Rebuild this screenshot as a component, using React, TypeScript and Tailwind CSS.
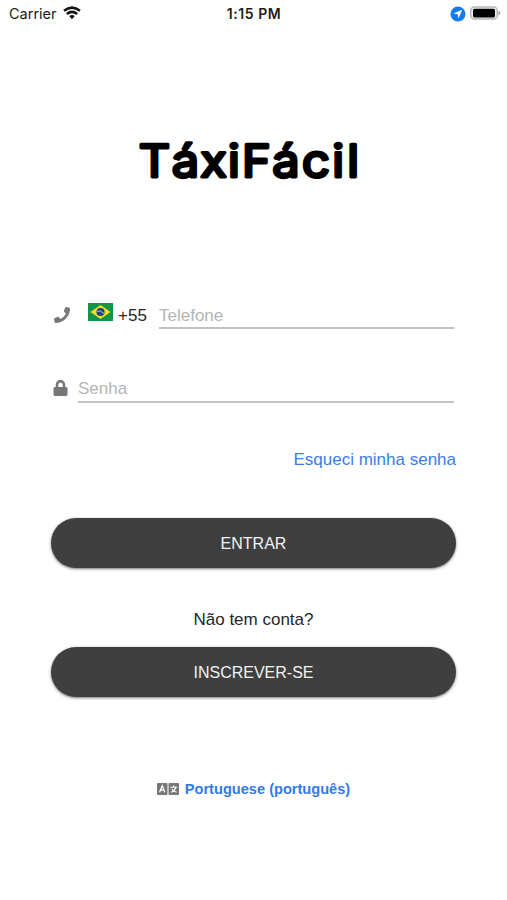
import React from "react";
import { FaLock, FaPhone } from "react-icons/fa";

function StatusBar() {
  return (
    <header className="grid h-7 grid-cols-3 items-center pl-[9px] pr-[6px] font-['Inter',sans-serif] text-[#1c1c1c]">
      <div className="flex items-center gap-[6px]">
        <span className="text-[14.5px] leading-5">Carrier</span>
        <svg viewBox="0 0 18 14" className="-mt-[2px] h-[14px] w-[18px]" fill="none" stroke="#111" strokeWidth="2.5">
          <path d="M1 4.8 Q9 -1.6 17 4.8" />
          <path d="M3.8 8 Q9 3.7 14.2 8" />
          <path d="M6.2 10 Q9 7.8 11.8 10 L9 13.2Z" fill="#111" stroke="none" />
        </svg>
      </div>
      <span className="-ml-[2px] whitespace-nowrap text-center text-[14px] font-semibold leading-5 tracking-[0.55px]">1:15 PM</span>
      <div className="flex items-center justify-end gap-[4px]">
        <svg viewBox="0 0 16 16" className="h-4 w-4">
          <circle cx="8" cy="8" r="7.5" fill="#147bf6" />
          <path d="M12.3 3.7 3.5 7.6 7.7 8.3 8.5 12.4Z" fill="white" />
        </svg>
        <svg viewBox="0 0 31 15" className="-mt-px h-[15px] w-[31px]">
          <rect x=".8" y="1" width="26.4" height="12" rx="3.6" fill="#f0f0f0" stroke="#b8b8b8" strokeWidth="1.5" />
          <rect x="3" y="2.8" width="22" height="8.6" rx="1.5" fill="#000" />
          <path d="M28.5 4.4q3.6 2.6 0 5.2Z" fill="#999" />
        </svg>
      </div>
    </header>
  );
}

function Logo() {
  return (
    <h1 className="mt-[102px] h-[60px]">
      <svg viewBox="0 0 507 60" className="h-[60px] w-full">
        <g transform="scale(1.08 1)">
          <text
            x="143.1 171.6 197.7 216.5 237.4 264.8 292.6 313 326.9"
            y="46.6"
            textAnchor="middle"
            textRendering="geometricPrecision"
            className="font-['Inter',sans-serif] text-[45px] font-normal"
            fill="black"
            stroke="black"
            strokeWidth="3.1"
            strokeLinejoin="round"
          >
            TáxiFácil
          </text>
        </g>
      </svg>
    </h1>
  );
}

function BrazilFlag() {
  return (
    <svg viewBox="0 0 25 18" className="-mt-[4px] ml-[18px] h-[18px] w-[25px] shrink-0">
      <rect width="25" height="18" fill="#149447" />
      <path d="M12.5 2 22.5 9 12.5 16 2.5 9Z" fill="#f4df20" />
      <circle cx="12.5" cy="9" r="4.1" fill="#20447c" />
      <path d="M8.7 8q4.4-.7 7.4 2.7" fill="none" stroke="#dce7dd" strokeWidth=".8" />
    </svg>
  );
}

function LanguageIcon() {
  return (
    <svg viewBox="0 0 22 12" className="h-3 w-[22px] shrink-0">
      <rect width="10.5" height="12" rx="1" fill="#777" />
      <rect x="11.5" width="10.5" height="12" rx="1" fill="#777" />
      <path d="M2.6 9.3 5.2 2.8 7.8 9.3M3.5 7.2h3.4" fill="none" stroke="white" strokeWidth="1.3" />
      <path d="M13.3 4.3h7M16.8 2.5v1.8M18.8 4.3q-.8 3.4-4.6 5M15 6q1.2 2.3 4.6 3.3" fill="none" stroke="white" strokeWidth="1.1" />
    </svg>
  );
}

function PillButton({ children }: { children: React.ReactNode }) {
  return (
    <button className="block h-[50px] w-full rounded-full bg-[#3f3f3f] text-[16px] leading-[52px] text-[#f2f2f2] shadow-[0_1px_3px_rgba(0,0,0,0.55)]">
      {children}
    </button>
  );
}

export default function App() {
  return (
    <main className="h-[900px] w-full overflow-hidden bg-white font-['Liberation_Sans',Arial,sans-serif] text-[#262626]">
      <StatusBar />
      <Logo />
      <form className="ml-[51px] mt-[109px] w-[405px]" onSubmit={(e) => e.preventDefault()}>
        <div className="flex h-[30px] items-center">
          <FaPhone className="ml-[3px] mt-[2px] h-4 w-4 shrink-0 text-[#777]" />
          <BrazilFlag />
          <span className="ml-[5px] mt-[3px] w-[41px] shrink-0 text-[17px]">+55</span>
          <input
            placeholder="Telefone"
            className="h-[30px] w-[295px] border-b-2 border-[#c2c2c2] pt-[5px] text-[17px] outline-none placeholder:text-[#b5b5b5]"
          />
        </div>
        <div className="mt-[44px] flex h-[30px] items-center">
          <FaLock className="ml-[2px] h-4 w-[15px] shrink-0 text-[#777]" />
          <input
            placeholder="Senha"
            className="ml-[10px] h-[30px] w-[376px] border-b-2 border-[#c2c2c2] pt-[3px] text-[17px] outline-none placeholder:text-[#b5b5b5]"
          />
        </div>
        <a className="mt-[45px] block h-6 text-right text-[17px] leading-6 text-[#3b7ded]">Esqueci minha senha</a>
        <div className="mt-[46px]">
          <PillButton>ENTRAR</PillButton>
        </div>
        <p className="mt-[40px] h-6 text-center text-[17px] leading-6">Não tem conta?</p>
        <div className="mt-[15px]">
          <PillButton>INSCREVER-SE</PillButton>
        </div>
      </form>
      <div className="mt-[82px] flex h-5 items-center justify-center gap-[6px]">
        <LanguageIcon />
        <span className="text-[14.6px] font-bold leading-5 text-[#3479e8]">Portuguese (português)</span>
      </div>
    </main>
  );
}
